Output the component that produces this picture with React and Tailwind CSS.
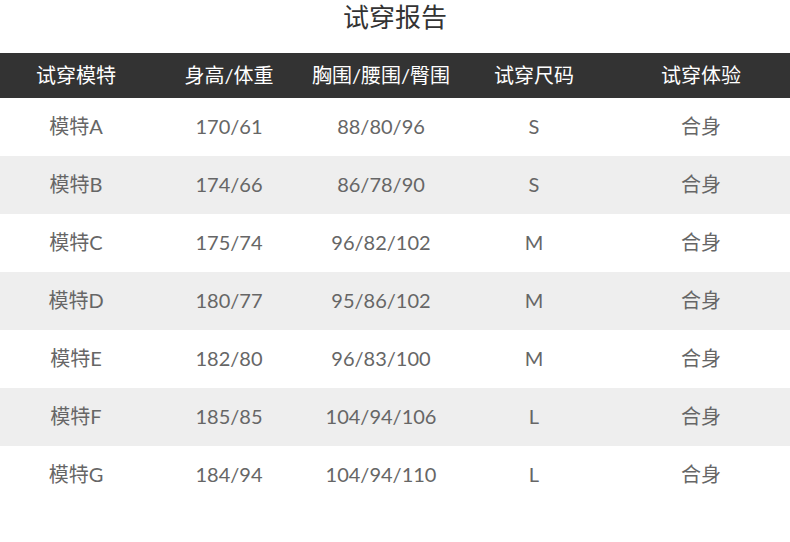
export default function App() {
  const rows = [
    ["模特A", "170/61", "88/80/96", "S", "合身"],
    ["模特B", "174/66", "86/78/90", "S", "合身"],
    ["模特C", "175/74", "96/82/102", "M", "合身"],
    ["模特D", "180/77", "95/86/102", "M", "合身"],
    ["模特E", "182/80", "96/83/100", "M", "合身"],
    ["模特F", "185/85", "104/94/106", "L", "合身"],
    ["模特G", "184/94", "104/94/110", "L", "合身"],
  ];
  const head = ["试穿模特", "身高/体重", "胸围/腰围/臀围", "试穿尺码", "试穿体验"];
  const grid = "grid grid-cols-[152px_154px_150px_156px_178px]";
  return (
    <div className="w-[790px] h-[542px] bg-white font-['Lato','Noto_Sans_CJK_SC',sans-serif]">
      <div className="h-[53px]">
        <div className="text-center text-[26px] leading-[34px] text-[#333]">试穿报告</div>
      </div>
      <div className={`${grid} h-[45px] bg-[#333333] text-white text-[20px] items-center pb-[1px]`}>
        {head.map((h, i) => (
          <div key={i} className="text-center">{h}</div>
        ))}
      </div>
      {rows.map((r, ri) => (
        <div key={ri} className={`${grid} h-[58px] items-center text-[20px] text-[#666] pb-[3px] ${ri % 2 === 1 ? "bg-[#eeeeee]" : "bg-white"}`}>
          {r.map((c, i) => (
            <div key={i} className="text-center">{c}</div>
          ))}
        </div>
      ))}
    </div>
  );
}
